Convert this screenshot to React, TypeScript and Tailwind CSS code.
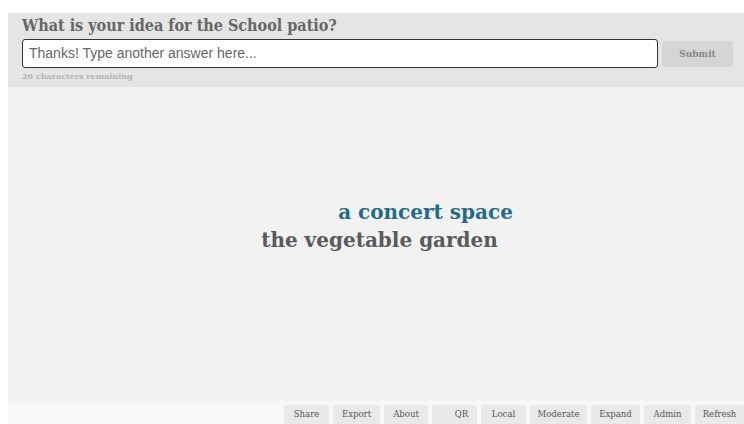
import React from "react";

const slab = { fontFamily: '"DejaVu Serif", serif' };
const slabNarrow = { fontFamily: '"DejaVu Serif Condensed", "DejaVu Serif", serif' };

const buttons = [
  { label: "Share", w: "w-[45px]", icon: false },
  { label: "Export", w: "w-[47px]", icon: false },
  { label: "About", w: "w-[44px]", icon: false },
  { label: "QR", w: "w-[45px]", icon: true },
  { label: "Local", w: "w-[45px]", icon: false },
  { label: "Moderate", w: "w-[57px]", icon: false },
  { label: "Expand", w: "w-[49px]", icon: false },
  { label: "Admin", w: "w-[47px]", icon: false },
  { label: "Refresh", w: "w-[49px]", icon: false },
];

export default function App() {
  return (
    <div className="h-[424px] w-[744px] bg-white pt-[13px] pl-[8px] flex flex-col overflow-hidden">
      <div className="h-[74px] bg-[#e5e5e5] pl-[14px] pr-[11px] pt-[1px]">
        <h1
          className="text-[16px] leading-[24px] font-bold text-[#666]"
          style={slabNarrow}
        >
          What is your idea for the School patio?
        </h1>
        <div className="flex items-center gap-[4px] mt-[1px]">
          <div className="flex-1 h-[29px] bg-white border border-[#333] rounded-[3px] flex items-center pl-[6px]">
            <span
              className="text-[14px] text-[#666]"
              style={{ fontFamily: '"Liberation Sans", Arial, sans-serif' }}
            >
              Thanks! Type another answer here...
            </span>
          </div>
          <button
            className="w-[71px] h-[26px] bg-[#d5d5d5] rounded-[3px] text-[10px] font-bold text-[#888]"
            style={slabNarrow}
          >
            Submit
          </button>
        </div>
        <div
          className="text-[8px] font-bold text-[#b3b3b3] mt-[3px] leading-[10px]"
          style={slab}
        >
          20 characters remaining
        </div>
      </div>
      <div
        className="flex-1 bg-[#f2f2f2] flex flex-col items-center justify-center pb-[36px]"
        style={slab}
      >
        <div className="text-[20px] leading-[28px] font-bold text-[#1f6b8c] pl-[99px]">
          a concert space
        </div>
        <div className="text-[20px] leading-[28px] font-bold text-[#5a5a5a] pl-[7px]">
          the vegetable garden
        </div>
      </div>
      <div className="h-[23px] bg-[#f8f8f8] flex justify-end items-end gap-[4px]" style={slabNarrow}>
        {buttons.map((b) => (
          <div
            key={b.label}
            className={`${b.w} h-[19px] bg-[#e9e9e9] rounded-t-[3px] flex items-center justify-center text-[9.5px] text-[#555]`}
          >
            {b.icon && <span className="w-[14px]" />}
            {b.label}
          </div>
        ))}
      </div>
    </div>
  );
}
